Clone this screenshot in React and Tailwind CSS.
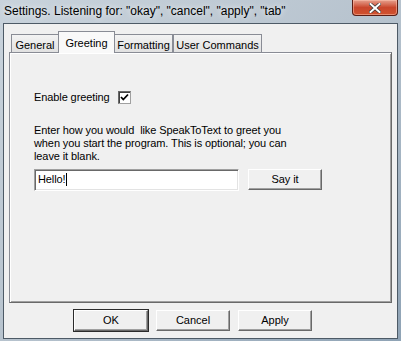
import React from 'react';

const font = { fontFamily: '"Liberation Sans", Arial, sans-serif' };

function Tab({ label, width, selected }) {
  if (selected) {
    return (
      <div
        className={`relative z-10 -mb-px h-[22px] ${width} -mx-[1px] flex items-start justify-center pt-[3px] bg-[#f9f9f9] border border-b-0 border-[#898c95] text-[11px]`}
      >
        {label}
      </div>
    );
  }
  return (
    <div
      className={`h-[18px] ${width} flex items-start justify-center pt-[2px] bg-gradient-to-b from-[#f3f3f3] to-[#e1e1e1] border border-b-0 border-[#898c95] text-[11px]`}
    >
      {label}
    </div>
  );
}

function Button({ children, isDefault, className = '' }) {
  return (
    <div className={`${isDefault ? 'border border-[#2b2b2b]' : 'border border-transparent'} ${className}`}>
      <div className="h-[21px] flex items-center justify-center bg-[#f0f0f0] border-t border-l border-t-[#ffffff] border-l-[#ffffff] border-r border-b border-r-[#696969] border-b-[#696969] shadow-[inset_-1px_-1px_0_#a0a0a0] text-[11px]">
        {children}
      </div>
    </div>
  );
}

export default function App() {
  return (
    <div
      className="w-[401px] h-[341px] flex flex-col px-[3px] pb-[2px] bg-gradient-to-br from-[#c9d3dc] via-[#b7c3ce] to-[#8fa3b5] text-black"
      style={font}
    >
      {/* title bar */}
      <div className="h-[23px] flex items-start justify-between">
        <div className="pt-[4px] pl-[1px] text-[12px] leading-[14px] [text-shadow:0_0_6px_#ffffff]">
          Settings. Listening for: "okay", "cancel", "apply", "tab"
        </div>
        <div className="w-[46px] h-[16px] flex items-center justify-center rounded-b-[4px] border border-t-0 border-[#5a1d14] bg-gradient-to-b from-[#e5a08e] via-[#c9462c] to-[#d0522e] shadow-[inset_0_0_0_1px_rgba(255,200,180,0.5)]">
          <svg width="12" height="10" viewBox="0 0 12 10">
            <path d="M1.5 1 L10.5 9 M10.5 1 L1.5 9" stroke="#3a3a3a" strokeWidth="3.4" strokeLinecap="square" />
            <path d="M1.5 1 L10.5 9 M10.5 1 L1.5 9" stroke="#ffffff" strokeWidth="2" strokeLinecap="square" />
          </svg>
        </div>
      </div>

      {/* client area */}
      <div className="flex-1 flex flex-col bg-[#f0f0f0] border border-[#4d5a66]">
        <div className="pt-[7px] pl-[5px] pr-[5px] flex flex-col">
          {/* tabs */}
          <div className="flex items-end pl-[2px]">
            <Tab label="General" width="w-[48px]" />
            <Tab label="Greeting" width="w-[57px]" selected />
            <Tab label="Formatting" width="w-[59px]" />
            <Tab label="User Commands" width="w-[89px]" />
          </div>
          {/* panel */}
          <div className="h-[251px] bg-[#f0f0f0] border border-[#898c95] border-r-[#696969] border-b-[#696969] shadow-[inset_1px_1px_0_#ffffff,inset_-1px_-1px_0_#a0a0a0] pl-[24px] pt-[38px] text-[11px] leading-[13px] tracking-[-0.1px]">
            <div className="flex items-center h-[13px]">
              <span>Enable greeting</span>
              <div className="ml-[8px] w-[13px] h-[13px] bg-white border border-[#a0a0a0] border-t-[#696969] border-l-[#696969] shadow-[inset_1px_1px_0_#404040] flex items-center justify-center">
                <svg width="9" height="9" viewBox="0 0 9 9">
                  <path d="M1 4 L3.3 6.5 L8 1.5" stroke="#000" strokeWidth="1.8" fill="none" />
                </svg>
              </div>
            </div>
            <p className="mt-[20px] w-[270px] whitespace-pre">
              {'Enter how you would  like SpeakToText to greet you\nwhen you start the program. This is optional; you can\nleave it blank.'}
            </p>
            <div className="mt-[5px] flex items-center">
              <div className="w-[205px] h-[22px] bg-white border border-t-[#a0a0a0] border-l-[#a0a0a0] border-r-[#ffffff] border-b-[#ffffff] shadow-[inset_1px_1px_0_#696969,inset_-1px_-1px_0_#e3e3e3] flex items-center pl-[3px]">
                <span>Hello!</span>
                <span className="w-px h-[13px] bg-black" />
              </div>
              <Button className="ml-[8px] w-[76px]">Say it</Button>
            </div>
          </div>
        </div>
        {/* bottom buttons */}
        <div className="mt-[6px] flex pl-[69px] gap-[6px]">
          <Button isDefault className="w-[76px]">OK</Button>
          <Button className="w-[76px]">Cancel</Button>
          <Button className="w-[76px]">Apply</Button>
        </div>
      </div>
    </div>
  );
}
